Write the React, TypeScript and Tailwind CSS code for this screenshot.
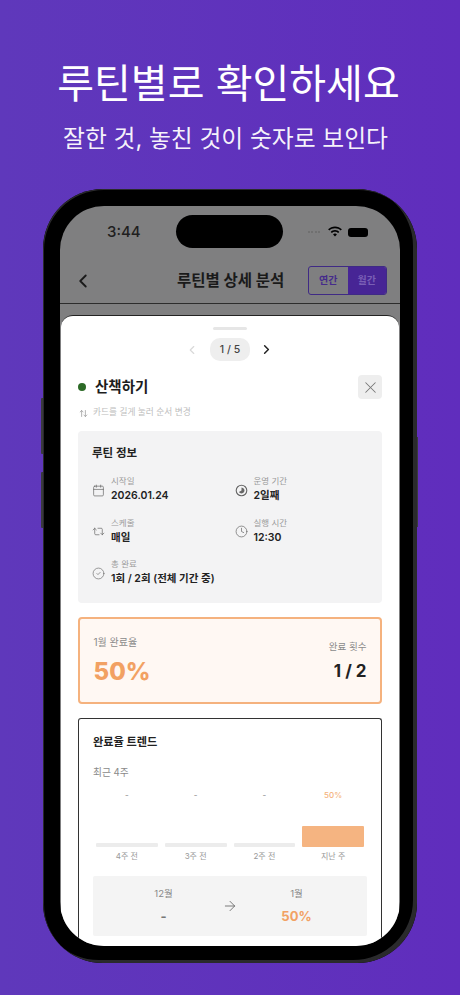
import React from "react";
import { ChevronLeft, ChevronRight, X, ArrowRight, Calendar, Repeat2, Clock, CircleCheck, ArrowUpDown } from "lucide-react";

const font = "font-['Inter','Noto_Sans_CJK_KR',sans-serif]";

function Info({ icon, label, value, className = "" }: { icon: React.ReactNode; label: string; value: string; className?: string }) {
  return (
    <div className={`flex items-center gap-[6px] ${className}`}>
      <div className="w-[13px] flex justify-center text-[#666]">{icon}</div>
      <div className="flex flex-col">
        <span className="text-[8.5px] leading-[12px] text-[#9a9a9a]">{label}</span>
        <span className="text-[10.5px] leading-[18px] font-semibold text-[#222]">{value}</span>
      </div>
    </div>
  );
}

function Bar({ value, label, active }: { value: string; label: string; active?: boolean }) {
  return (
    <div className="flex-1 flex flex-col items-center">
      <span className={`text-[8px] leading-[10px] h-[10px] font-medium ${active ? "text-[#f4b27c]" : "text-[#999]"}`}>{value}</span>
      <div className="h-[52px] w-full flex items-end mt-[-5px]">
        <div className={`w-full rounded-[1px] ${active ? "h-[21px] bg-[#f5b481]" : "h-[4px] bg-[#ececec]"}`} />
      </div>
      <span className="text-[8px] leading-[10px] mt-[4px] text-[#999]">{label}</span>
    </div>
  );
}

export default function App() {
  return (
    <div className={`relative w-[460px] h-[995px] overflow-hidden flex flex-col items-center bg-gradient-to-r from-[#5f38bb] to-[#602dbd] ${font}`}>
      <h1 className="mt-[57px] mr-[3px] text-[40px] leading-[54px] font-normal text-white">루틴별로 확인하세요</h1>
      <p className="mt-[11px] mr-[9px] text-[23.8px] leading-[34px] font-normal text-white/95">잘한 것, 놓친 것이 숫자로 보인다</p>

      <div className="relative mt-[33px] w-[374px] h-[774px] shrink-0 rounded-[60px] bg-black p-[17px] shadow-[inset_-4px_-3px_0_#2a2a2c,inset_1px_1px_0_#2a2a2c]">
        <div className="absolute left-[-2px] top-[209px] w-[2px] h-[56px] bg-[#3a3a3e] rounded-l-[1px]" />
        <div className="absolute left-[-2px] top-[283px] w-[2px] h-[56px] bg-[#3a3a3e] rounded-l-[1px]" />
        <div className="absolute right-[-1px] top-[248px] w-[1px] h-[90px] bg-[#3a3a3e]" />
        <div className="w-full h-full rounded-[44px] bg-[#7f7f80] overflow-hidden flex flex-col relative">
          {/* status bar */}
          <div className="h-[52px] shrink-0 relative flex items-center justify-between pl-[47px] pr-[32px]">
            <span className="text-[15px] font-medium text-[#1f1f1f]">3:44</span>
            <div className="absolute left-[116px] top-[9px] w-[107px] h-[33px] rounded-full bg-black" />
            <div className="flex items-center gap-[5px]">
              <div className="flex gap-[1.5px] mr-[2px]">
                <span className="w-[2px] h-[2px] rounded-full bg-[#6b6b6b]" />
                <span className="w-[2px] h-[2px] rounded-full bg-[#6b6b6b]" />
                <span className="w-[2px] h-[2px] rounded-full bg-[#6b6b6b]" />
                <span className="w-[2px] h-[2px] rounded-full bg-[#6b6b6b]" />
              </div>
              <svg width="16" height="12" viewBox="0 0 16 12" fill="#000">
                <path d="M8 2.2c2.2 0 4.2.9 5.7 2.3l1.2-1.2C13.1 1.5 10.7.4 8 .4S2.900 1.500 1.100 3.300l1.200 1.200C3.800 3.100 5.800 2.200 8 2.200zM8 5.800c1.200 0 2.300.5 3.100 1.300l1.200-1.200C11.200 4.700 9.700 4 8 4S4.800 4.700 3.700 5.900l1.200 1.200C5.700 6.300 6.800 5.800 8 5.800zM8 7.600c-.8 0-1.400.3-1.900.8L8 10.500l1.900-2.100c-.5-.5-1.100-.8-1.900-.8z" />
              </svg>
              <div className="w-[20px] h-[9px] rounded-[3px] bg-black" />
            </div>
          </div>
          {/* header */}
          <div className="h-[46px] shrink-0 relative flex items-center justify-between pl-[12px] pr-[13px] border-b border-[#2c2c2c]">
            <ChevronLeft size={22} strokeWidth={2} className="text-[#1a1a1a]" />
            <span className="absolute left-[117px] text-[15.5px] font-bold text-[#1a1a1a]">루틴별 상세 분석</span>
            <div className="flex w-[79px] h-[29px] rounded-[3px] overflow-hidden border border-[#3f2a85]">
              <span className="flex-1 flex items-center justify-center text-[10px] font-semibold text-[#452b8b]">연간</span>
              <span className="flex-1 flex items-center justify-center text-[10px] font-semibold text-[#7a5fb5] bg-[#472595]">월간</span>
            </div>
          </div>
          {/* sheet */}
          <div className="mt-[11px] mx-px flex-1 min-h-0 rounded-t-[12px] bg-white border-t border-[#222] overflow-hidden px-[17px] flex flex-col">
            <div className="mt-[11px] mx-auto w-[34px] h-[3px] shrink-0 rounded-full bg-[#e6e6e6]" />
            <div className="mt-[8px] h-[23px] shrink-0 relative flex items-center justify-center">
              <ChevronLeft size={14} className="absolute left-[107px] text-[#d9d9d9]" />
              <span className="w-[40px] h-[23px] rounded-[10px] bg-[#eeeeee] flex items-center justify-center text-[10.5px] font-medium text-[#444]">1 / 5</span>
              <ChevronRight size={15} strokeWidth={2.4} className="absolute left-[181px] text-[#222]" />
            </div>
            <div className="mt-[14px] h-[24px] shrink-0 flex items-center">
              <span className="w-[8px] h-[8px] rounded-full bg-[#2c6a26]" />
              <span className="ml-[9px] text-[14.5px] font-bold text-[#1d1d1d]">산책하기</span>
              <span className="ml-auto w-[24px] h-[24px] rounded-[4px] bg-[#eeeeee] flex items-center justify-center">
                <X size={19} strokeWidth={1.3} className="text-[#777]" />
              </span>
            </div>
            <div className="mt-[7px] h-[14px] shrink-0 flex items-center gap-[5px] text-[#bdbdbd]">
              <ArrowUpDown size={9} className="text-[#999] ml-px" />
              <span className="text-[8.7px]">카드를 길게 눌러 순서 변경</span>
            </div>
            {/* info */}
            <div className="mt-[11px] h-[172px] shrink-0 rounded-[4px] bg-[#f3f3f4] pl-[14px] pr-[15px] pt-[14px]">
              <div className="text-[11.5px] leading-[17px] font-bold text-[#222]">루틴 정보</div>
              <div className="mt-[13px] grid grid-cols-2 gap-y-[11.5px]">
                <Info icon={<Calendar size={13} strokeWidth={1.3} />} label="시작일" value="2026.01.24" />
                <Info className="ml-[5px]" icon={
                  <svg width="13" height="13" viewBox="0 0 13 13" fill="none" stroke="currentColor" strokeWidth="1.1"><circle cx="6.500" cy="6.500" r="5.300" /><path d="M6.500 3.500a3 3 0 1 1-2.600 4.500l2.600-1.500z" fill="currentColor" stroke="none" /></svg>
                } label="운영 기간" value="2일째" />
                <Info icon={<Repeat2 size={13} strokeWidth={1.3} />} label="스케줄" value="매일" />
                <Info className="ml-[5px]" icon={<Clock size={13} strokeWidth={1.3} />} label="실행 시간" value="12:30" />
                <Info icon={<CircleCheck size={13} strokeWidth={1.2} />} label="총 완료" value="1회 / 2회 (전체 기간 중)" className="col-span-2" />
              </div>
            </div>
            {/* rate */}
            <div className="mt-[14px] h-[87px] shrink-0 rounded-[4px] border-2 border-[#f5b27e] bg-[#fff8f3] px-[13.5px] flex items-center justify-between">
              <div className="flex flex-col">
                <span className="text-[10px] leading-[14px] text-[#8a8a8a]">1월 완료율</span>
                <span className="mt-[8px] text-[24px] leading-[30px] font-extrabold text-[#f2a163]">50%</span>
              </div>
              <div className="flex flex-col items-end">
                <span className="text-[9.5px] leading-[14px] text-[#8a8a8a]">완료 횟수</span>
                <span className="mt-[6px] text-[17px] leading-[22px] font-bold text-[#222]">1 / 2</span>
              </div>
            </div>
            {/* trend */}
            <div className="mt-[14px] flex-1 min-h-0 rounded-t-[3px] border border-b-0 border-[#333] px-[14px] pt-[15px]">
              <div className="text-[11.2px] leading-[17px] font-bold text-[#222]">완료율 트렌드</div>
              <div className="mt-[15px] text-[9.7px] leading-[14px] text-[#8a8a8a]">최근 4주</div>
              <div className="mt-[10px] flex gap-[7px] px-[3px]">
                <Bar value="-" label="4주 전" />
                <Bar value="-" label="3주 전" />
                <Bar value="-" label="2주 전" />
                <Bar value="50%" label="지난 주" active />
              </div>
              <div className="mt-[15px] h-[60px] rounded-[2px] bg-[#f4f4f4] flex items-center px-[12px]">
                <div className="flex-1 flex flex-col items-center">
                  <span className="text-[9.5px] leading-[14px] text-[#888]">12월</span>
                  <span className="mt-[6px] text-[13px] leading-[18px] font-bold text-[#777]">-</span>
                </div>
                <ArrowRight size={16} strokeWidth={1.3} className="text-[#666] shrink-0" />
                <div className="flex-1 flex flex-col items-center">
                  <span className="text-[9.5px] leading-[14px] text-[#888]">1월</span>
                  <span className="mt-[6px] text-[13px] leading-[18px] font-bold text-[#f2a163]">50%</span>
                </div>
              </div>
            </div>
          </div>
        </div>
      </div>
    </div>
  );
}
